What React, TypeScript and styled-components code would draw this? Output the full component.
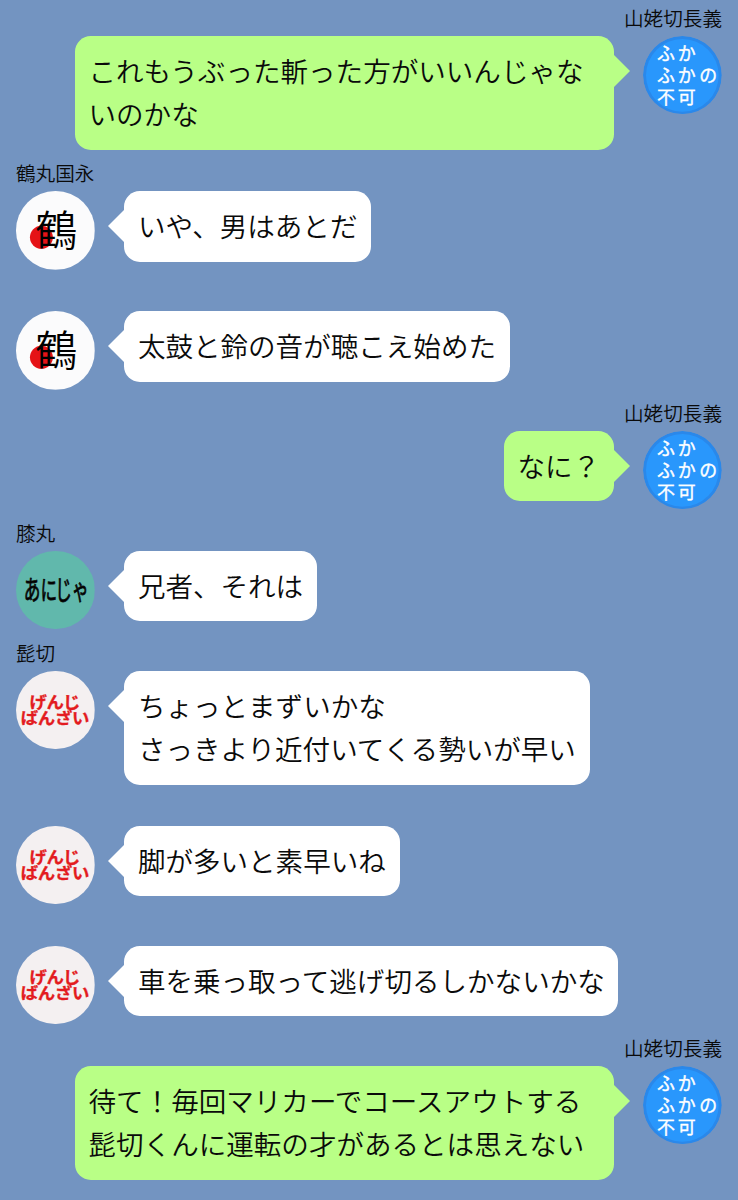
import React from "react";
import styled, { createGlobalStyle } from "styled-components";

const GlobalStyle = createGlobalStyle`
  body {
    margin: 0;
    background: #7394c1;
    font-family: "Noto Sans CJK JP", sans-serif;
    color: #0a0a0a;
  }
`;

type Side = "left" | "right";
type Who = "chogi" | "tsurumaru" | "hizamaru" | "higekiri";

const Chat = styled.main`
  box-sizing: border-box;
  height: 1200px;
  padding: 7px 16px 0;
  overflow: hidden;
  background: #7394c1;
`;

const Message = styled.section<{ $side: Side }>`
  display: flex;
  flex-direction: column;
  align-items: ${(p) => (p.$side === "right" ? "flex-end" : "flex-start")};
  margin-bottom: 12.42px;
`;

const Name = styled.div`
  height: 28.8px;
  font-size: 19.6px;
  line-height: 22px;
  font-weight: 350;
  white-space: nowrap;
`;

const Row = styled.div<{ $side: Side }>`
  display: flex;
  flex-direction: ${(p) => (p.$side === "right" ? "row-reverse" : "row")};
  align-items: flex-start;
  gap: 29.5px;
`;

const Bubble = styled.div<{ $side: Side }>`
  position: relative;
  box-sizing: border-box;
  max-width: 539px;
  padding: 13.4px 13.7px 14px;
  border-radius: 15.8px;
  background: ${(p) => (p.$side === "right" ? "#b9ff86" : "#ffffff")};
  font-size: 27.55px;
  line-height: 43.3px;
  font-weight: 350;
  white-space: pre-line;

  &::after {
    content: "";
    position: absolute;
    top: 19px;
    ${(p) => (p.$side === "right" ? "left: 100%;" : "right: 100%;")}
    border: 16px solid transparent;
    ${(p) =>
      p.$side === "right"
        ? "margin-left: -0.3px; border-right-width: 0; border-left-color: #b9ff86;"
        : "margin-right: -0.3px; border-left-width: 0; border-right-color: #ffffff;"}
  }
`;

const Picture = styled.svg`
  display: block;
  flex: none;
  width: 78.7px;
  height: 78.7px;
  border-radius: 50%;
`;

function Avatar({ who }: { who: Who }) {
  if (who === "chogi") {
    return (
      <Picture viewBox="0 0 79 79">
        <circle cx="39.5" cy="39.5" r="39.5" fill="#2a88ea" />
        <circle cx="39.5" cy="39.5" r="36.5" fill="#2997fc" />
        <g
          fill="#fff"
          stroke="#fff"
          strokeWidth="0.4"
          strokeLinejoin="round"
          fontSize="18"
          fontWeight="400"
        >
          <text x="14 35" y="24.5">ふか</text>
          <text x="14 35 56.5" y="46.2">ふかの</text>
          <text x="14 35" y="68">不可</text>
        </g>
      </Picture>
    );
  }
  if (who === "tsurumaru") {
    return (
      <Picture viewBox="0 0 79 79">
        <rect width="79" height="79" fill="#fbfbfc" />
        <circle cx="25.5" cy="46.5" r="11.5" fill="#e51317" />
        <text x="19.5" y="55.5" fontSize="42" fontWeight="350">鶴</text>
      </Picture>
    );
  }
  if (who === "hizamaru") {
    return (
      <Picture viewBox="0 0 79 79">
        <rect width="79" height="79" fill="#61b8ac" />
        <g
          transform="translate(8.5 49.5) scale(0.62 1)"
          stroke="#0a0a0a"
          strokeWidth="0.8"
          strokeLinejoin="round"
        >
          <text x="-1 26 50 77" y="0" fontSize="27" fontWeight="400">あにじゃ</text>
        </g>
      </Picture>
    );
  }
  return (
    <Picture viewBox="0 0 79 79">
      <rect width="79" height="79" fill="#f4f0f1" />
      <text
        transform="scale(1.06 1)"
        fill="#e31b20"
        stroke="#e31b20"
        strokeWidth="0.3"
        strokeLinejoin="round"
        fontSize="16.5"
        fontWeight="700"
      >
        <tspan x="12.8 29 44.5" y="36.8">げんじ</tspan>
        <tspan x="4.5 20.5 37 53" y="53.6">ばんざい</tspan>
      </text>
    </Picture>
  );
}

interface Entry {
  who: Who;
  name?: string;
  text: string;
}

const entries: Entry[] = [
  { who: "chogi", name: "山姥切長義", text: "これもうぶった斬った方がいいんじゃないのかな" },
  { who: "tsurumaru", name: "鶴丸国永", text: "いや、男はあとだ" },
  { who: "tsurumaru", text: "太鼓と鈴の音が聴こえ始めた" },
  { who: "chogi", name: "山姥切長義", text: "なに？" },
  { who: "hizamaru", name: "膝丸", text: "兄者、それは" },
  { who: "higekiri", name: "髭切", text: "ちょっとまずいかな\nさっきより近付いてくる勢いが早い" },
  { who: "higekiri", text: "脚が多いと素早いね" },
  { who: "higekiri", text: "車を乗っ取って逃げ切るしかないかな" },
  {
    who: "chogi",
    name: "山姥切長義",
    text: "待て！毎回マリカーでコースアウトする髭切くんに運転の才があるとは思えない",
  },
];

export default function App() {
  return (
    <>
      <GlobalStyle />
      <Chat lang="ja">
        {entries.map((entry, i) => {
          const side: Side = entry.who === "chogi" ? "right" : "left";
          return (
            <Message key={i} $side={side}>
              <Name>{entry.name}</Name>
              <Row $side={side}>
                <Avatar who={entry.who} />
                <Bubble $side={side}>{entry.text}</Bubble>
              </Row>
            </Message>
          );
        })}
      </Chat>
    </>
  );
}
